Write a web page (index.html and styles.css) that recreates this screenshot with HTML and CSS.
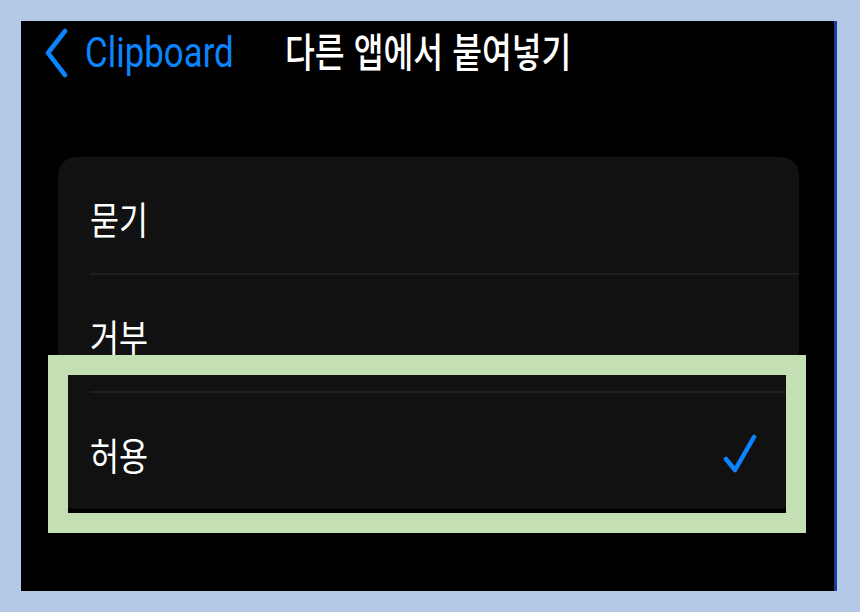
FILE: index.html
```html
<!DOCTYPE html>
<html lang="ko">
<head>
<meta charset="utf-8">
<link rel="stylesheet" href="styles.css">
</head>
<body>
<div class="screen">
  <header class="nav">
    <a class="back">
      <svg class="chev" width="26" height="50" viewBox="0 0 26 50"><path d="M22 3 L5 25 L22 47" fill="none" stroke="#0a84ff" stroke-width="4.5" stroke-linecap="round" stroke-linejoin="round"/></svg>
      <span class="back-label sq">Clipboard</span>
    </a>
    <h1 class="title sq">다른 앱에서 붙여넣기</h1>
  </header>
  <div class="card">
    <div class="row"><span class="label sq">묻기</span></div>
    <div class="sep"></div>
    <div class="row"><span class="label sq">거부</span></div>
    <div class="sep"></div>
    <div class="row"><span class="label sq">허용</span>
      <svg class="check" width="34" height="42" viewBox="0 0 34 42"><path d="M3 26 L12 37 L31 4" fill="none" stroke="#0a84ff" stroke-width="4.5" stroke-linecap="round" stroke-linejoin="round"/></svg>
    </div>
  </div>
  <div class="highlight"></div>
</div>
</body>
</html>
```

FILE: styles.css
```css
html, body {
  margin: 0;
  padding: 0;
}
body {
  background: #b4c8e8;
  width: 860px;
  height: 612px;
  overflow: hidden;
  font-family: "Noto Sans CJK KR", "Noto Sans", sans-serif;
}
.screen {
  position: relative;
  margin: 21px 0 0 21px;
  width: 813px;
  height: 570px;
  background: #000;
  border-right: 3px solid #1d3c9c;
}
.sq {
  display: inline-block;
  transform: scaleX(0.83);
  transform-origin: left center;
  white-space: nowrap;
}
.nav {
  display: flex;
  align-items: center;
  height: 62px;
  padding-left: 22px;
}
.back {
  display: flex;
  align-items: center;
  gap: 16px;
  width: 242px;
}
.chev {
  flex: none;
  margin-top: 2px;
}
.back-label {
  font-family: Roboto, "Liberation Sans", sans-serif;
  font-size: 42px;
  color: #0a84ff;
}
.title {
  margin: 0;
  font-size: 40px;
  font-weight: 500;
  color: #fff;
  transform: scaleX(0.81);
  margin-top: -4px;
}
.card {
  margin: 74px 0 0 37px;
  width: 741px;
  background: #111111;
  border-radius: 18px;
  overflow: hidden;
}
.row {
  height: 116px;
  display: flex;
  align-items: center;
  justify-content: space-between;
  padding: 0 42px 0 32px;
}
.label {
  font-size: 38px;
  color: #fff;
  margin-top: 4px;
}
.sep {
  height: 2px;
  background: #1f1f1f;
  margin-left: 32px;
}
.check {
  margin-top: 6px;
}
.highlight {
  position: absolute;
  left: 27px;
  top: 334px;
  width: 718px;
  height: 138px;
  border: 20px solid #c5dfb4;
}
```
